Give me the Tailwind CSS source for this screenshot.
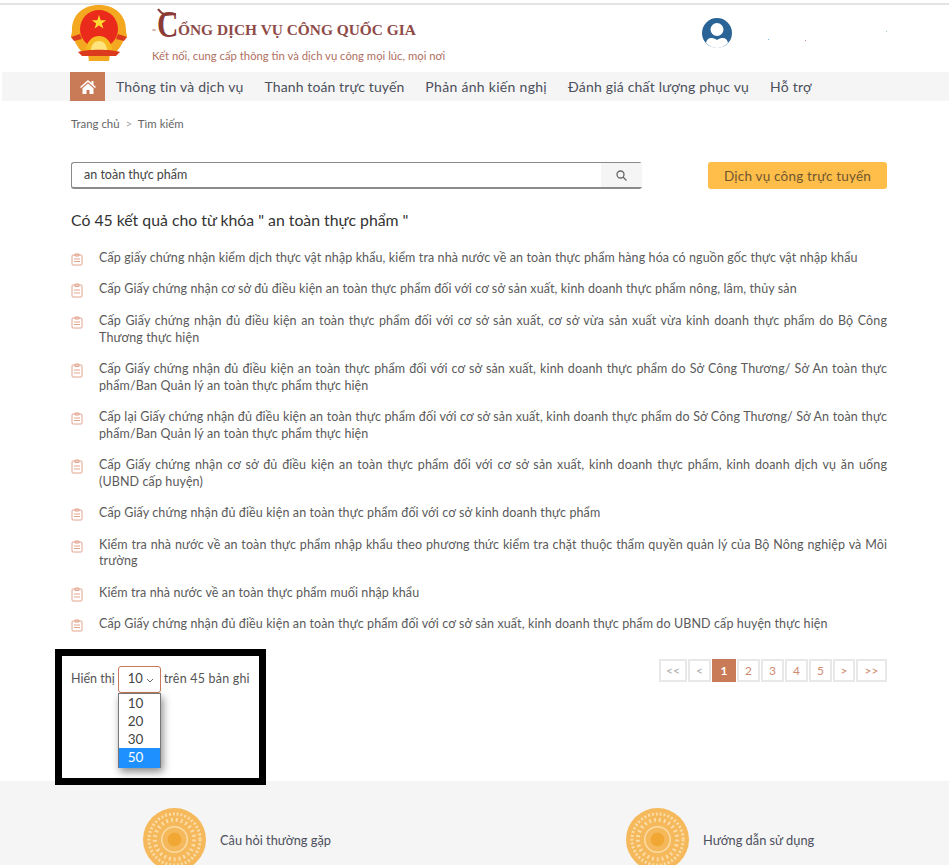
<!DOCTYPE html>
<html lang="vi">
<head>
  <meta charset="UTF-8">
  <meta name="viewport" content="width=device-width, initial-scale=1.0">
  <title>Cổng Dịch vụ công Quốc gia</title>
  <script src="https://cdn.jsdelivr.net/npm/@tailwindcss/browser@4"></script>
</head>
<body class="bg-white h-[865px] overflow-hidden relative font-['Lato',sans-serif] text-[#555]">

  <!-- top strip -->
  <div class="pt-[3px]"><div class="h-[2px] bg-[#e4e4e4]"></div></div>

  <!-- header -->
  <header class="h-[67px] pl-[71px] flex relative">
    <svg class="w-[56px] h-[57px]" viewBox="0 0 56 57">
      <path d="M28 0C44 0 55 10 55 25c0 3 1 5 1 7l-3 2c-2 6-5 10-9 14l-5 1-1 7H18l-1-7-5-1C8 44 5 40 3 34l-3-2c0-2 1-4 1-7C1 10 12 0 28 0z" fill="#f4a81f"/>
      <circle cx="28" cy="24" r="19" fill="#ea2a1b"/>
      <path d="M28 10l1.700 5.200h5.500l-4.400 3.200 1.700 5.200-4.500-3.200-4.500 3.200 1.700-5.200-4.400-3.200h5.500z" fill="#ffdc33"/>
      <path d="M15 46c0-9 6-15 13-15s13 6 13 15z" fill="#f6bb22"/>
      <path d="M20 46c0-6 3-10 8-10s8 4 8 10z" fill="#ffe47e"/>
      <path d="M7 47c8-3 34-3 42 0l-4 4H11z" fill="#dc3a1e"/>
      <path d="M0 32l9-3 2 5-8 2zM56 32l-9-3-2 5 8 2z" fill="#dc3a1e"/>
    </svg>
    <div class="ml-[25px] pt-[2px] w-[300px]">
      <div class="flex items-end h-[36px] font-['Liberation_Serif',serif] font-bold text-[#8e4a47]">
        <span class="relative w-[21px] ml-[5px]">
          <span class="block origin-left scale-x-[0.8] text-[37px] leading-[36px] font-bold text-[#8a3b36]">C</span>
          <svg class="absolute left-[-5px] top-0 w-[28px] h-[36px]" viewBox="0 0 28 36" fill="none" stroke="#8a3b36">
            <path d="M6 2c2 3 5 5 8 6 3 0 6-1 10-1" stroke-width="2"/>
            <ellipse cx="2" cy="23" rx="2" ry="1" fill="#d9b0a0" stroke="none"/>
          </svg>
        </span>
        <span class="text-[15.400px] leading-[22px] pb-[2px] whitespace-nowrap">ỔNG DỊCH VỤ CÔNG QUỐC GIA</span>
      </div>
      <p class="mt-[7px] text-[11.300px] leading-[12px] text-[#b0705f] whitespace-nowrap">Kết nối, cung cấp thông tin và dịch vụ công mọi lúc, mọi nơi</p>
    </div>
    <svg class="ml-[250px] mt-[13px] w-[30px] h-[30px]" viewBox="0 0 30 30">
      <circle cx="15" cy="15" r="15" fill="#2a6496"/>
      <circle cx="15" cy="11.500" r="6.500" fill="#fff"/>
      <path d="M4 25c1-5 5-6.500 11-3 6-3.500 10-2 11 3-3 3-7 5-11 5s-8-2-11-5z" fill="#fff"/>
    </svg>
    <i class="absolute left-[768px] top-[34px] w-px h-px bg-[#7cb7d8]"></i>
    <i class="absolute left-[805px] top-[35px] w-px h-px bg-[#d58aa0]"></i>
    <i class="absolute left-[886px] top-[26px] w-px h-px bg-[#9cc9e4]"></i>
  </header>

  <!-- nav -->
  <nav class="ml-[2px] h-[29px] bg-[#f5f5f5] pl-[68px] flex items-center text-[14px] text-[#4c4f5c] whitespace-nowrap">
    <div class="w-[35px] h-[29px] bg-[#c97a56] flex items-center justify-center mr-[11px]">
      <svg class="w-[16px] h-[14px]" viewBox="0 0 16 14" fill="#fff">
        <path d="M8 0L0 7l1 1 7-6 7 6 1-1-2.500-2.200V1h-2v2z"/>
        <path d="M2.500 8.300L8 3.500l5.500 4.800V14H9.500V10h-3v4h-4z"/>
      </svg>
    </div>
    <div class="flex gap-[21px] tracking-[0.2px]">
      <a href="#">Thông tin và dịch vụ</a>
      <a href="#" class="tracking-[0.1px]">Thanh toán trực tuyến</a>
      <a href="#" class="tracking-[0.3px]">Phản ánh kiến nghị</a>
      <a href="#">Đánh giá chất lượng phục vụ</a>
      <a href="#">Hỗ trợ</a>
    </div>
  </nav>

  <main class="pl-[71px] pr-[62px]">
    <div class="mt-[16px] text-[11.400px] leading-[14px] text-[#666]">Trang chủ <span class="text-[#aaa] mx-[3px]">&gt;</span> Tìm kiếm</div>

    <!-- search -->
    <div class="mt-[31px] flex justify-between">
      <div class="w-[571px] h-[27px] flex border-y border-l border-[#8a8a8a] border-b-2 rounded-[3px]">
        <div class="flex-1 pl-[12px] text-[12.500px] leading-[24px] text-[#444]">an toàn thực phẩm</div>
        <div class="w-[41px] bg-[#f5f5f5] flex items-center justify-center">
          <svg class="w-[11px] h-[11px]" viewBox="0 0 11 11" fill="none" stroke="#666" stroke-width="1.300">
            <circle cx="4.500" cy="4.500" r="3.500"/><path d="M7 7l3.500 3.500"/>
          </svg>
        </div>
      </div>
      <a href="#" class="w-[179px] h-[27px] pt-[2px] bg-[#ffbd4a] rounded-[3px] flex items-center justify-center text-[13.500px] tracking-[0.2px] text-[#6e5630]">Dịch vụ công trực tuyến</a>
    </div>

    <h1 class="mt-[21px] text-[15.800px] leading-[20px] text-[#333]">Có 45 kết quả cho từ khóa " an toàn thực phẩm "</h1>

    <!-- results -->
    <ul class="mt-[20px] flex flex-col gap-[14.800px] text-[12.500px] tracking-[0.11px] leading-[16.600px] text-[#5a5a5a]">
      <li class="flex"><svg class="w-[12px] h-[13px] mt-[3px] mr-[16px] shrink-0" viewBox="0 0 12 13" fill="none" stroke="#e3a48d"><rect x="1" y="2" width="10" height="10" rx="1"/><path d="M4 1h4v2H4zM3 6h6M3 8.500h6"/></svg><span class="flex-1 text-justify">Cấp giấy chứng nhận kiểm dịch thực vật nhập khẩu, kiểm tra nhà nước về an toàn thực phẩm hàng hóa có nguồn gốc thực vật nhập khẩu</span></li>
      <li class="flex"><svg class="w-[12px] h-[15px] mt-[2px] mr-[16px] shrink-0" viewBox="0 0 12 15" fill="none" stroke="#e3a48d"><rect x="1" y="2" width="10" height="12" rx="1"/><path d="M4 1h4v2.500H4zM3 7h6M3 10h6"/></svg><span class="flex-1 text-justify">Cấp Giấy chứng nhận cơ sở đủ điều kiện an toàn thực phẩm đối với cơ sở sản xuất, kinh doanh thực phẩm nông, lâm, thủy sản</span></li>
      <li class="flex"><svg class="w-[12px] h-[13px] mt-[3px] mr-[16px] shrink-0" viewBox="0 0 12 13" fill="none" stroke="#e3a48d"><rect x="1" y="2" width="10" height="10" rx="1"/><path d="M4 1h4v2H4zM3 6h6M3 8.500h6"/></svg><span class="flex-1 text-justify">Cấp Giấy chứng nhận đủ điều kiện an toàn thực phẩm đối với cơ sở sản xuất, cơ sở vừa sản xuất vừa kinh doanh thực phẩm do Bộ Công Thương thực hiện</span></li>
      <li class="flex"><svg class="w-[12px] h-[15px] mt-[2px] mr-[16px] shrink-0" viewBox="0 0 12 15" fill="none" stroke="#e3a48d"><rect x="1" y="2" width="10" height="12" rx="1"/><path d="M4 1h4v2.500H4zM3 7h6M3 10h6"/></svg><span class="flex-1 text-justify">Cấp Giấy chứng nhận đủ điều kiện an toàn thực phẩm đối với cơ sở sản xuất, kinh doanh thực phẩm do Sở Công Thương/ Sở An toàn thực phẩm/Ban Quản lý an toàn thực phẩm thực hiện</span></li>
      <li class="flex"><svg class="w-[12px] h-[13px] mt-[3px] mr-[16px] shrink-0" viewBox="0 0 12 13" fill="none" stroke="#e3a48d"><rect x="1" y="2" width="10" height="10" rx="1"/><path d="M4 1h4v2H4zM3 6h6M3 8.500h6"/></svg><span class="flex-1 text-justify">Cấp lại Giấy chứng nhận đủ điều kiện an toàn thực phẩm đối với cơ sở sản xuất, kinh doanh thực phẩm do Sở Công Thương/ Sở An toàn thực phẩm/Ban Quản lý an toàn thực phẩm thực hiện</span></li>
      <li class="flex"><svg class="w-[12px] h-[15px] mt-[2px] mr-[16px] shrink-0" viewBox="0 0 12 15" fill="none" stroke="#e3a48d"><rect x="1" y="2" width="10" height="12" rx="1"/><path d="M4 1h4v2.500H4zM3 7h6M3 10h6"/></svg><span class="flex-1 text-justify">Cấp Giấy chứng nhận cơ sở đủ điều kiện an toàn thực phẩm đối với cơ sở sản xuất, kinh doanh thực phẩm, kinh doanh dịch vụ ăn uống (UBND cấp huyện)</span></li>
      <li class="flex"><svg class="w-[12px] h-[13px] mt-[3px] mr-[16px] shrink-0" viewBox="0 0 12 13" fill="none" stroke="#e3a48d"><rect x="1" y="2" width="10" height="10" rx="1"/><path d="M4 1h4v2H4zM3 6h6M3 8.500h6"/></svg><span class="flex-1 text-justify">Cấp Giấy chứng nhận đủ điều kiện an toàn thực phẩm đối với cơ sở kinh doanh thực phẩm</span></li>
      <li class="flex"><svg class="w-[12px] h-[13px] mt-[3px] mr-[16px] shrink-0" viewBox="0 0 12 13" fill="none" stroke="#e3a48d"><rect x="1" y="2" width="10" height="10" rx="1"/><path d="M4 1h4v2H4zM3 6h6M3 8.500h6"/></svg><span class="flex-1 text-justify">Kiểm tra nhà nước về an toàn thực phẩm nhập khẩu theo phương thức kiểm tra chặt thuộc thẩm quyền quản lý của Bộ Nông nghiệp và Môi trường</span></li>
      <li class="flex"><svg class="w-[12px] h-[15px] mt-[2px] mr-[16px] shrink-0" viewBox="0 0 12 15" fill="none" stroke="#e3a48d"><rect x="1" y="2" width="10" height="12" rx="1"/><path d="M4 1h4v2.500H4zM3 7h6M3 10h6"/></svg><span class="flex-1 text-justify">Kiểm tra nhà nước về an toàn thực phẩm muối nhập khẩu</span></li>
      <li class="flex"><svg class="w-[12px] h-[13px] mt-[3px] mr-[16px] shrink-0" viewBox="0 0 12 13" fill="none" stroke="#e3a48d"><rect x="1" y="2" width="10" height="10" rx="1"/><path d="M4 1h4v2H4zM3 6h6M3 8.500h6"/></svg><span class="flex-1 text-justify">Cấp Giấy chứng nhận đủ điều kiện an toàn thực phẩm đối với cơ sở sản xuất, kinh doanh thực phẩm do UBND cấp huyện thực hiện</span></li>
    </ul>

    <!-- page size + pagination -->
    <div class="mt-[25.800px] flex justify-between items-start">
      <div class="mt-[7px] flex items-center text-[12.500px] text-[#555] relative">
        <span>Hiển thị</span>
        <div class="relative ml-[3px] mr-[3px] w-[43px] h-[27px] border border-[#c9795a] rounded-[3px] flex items-center pl-[9px] text-[13px] text-[#444]">
          10
          <svg class="absolute right-[6px] top-[11px] w-[8px] h-[5px]" viewBox="0 0 8 5" fill="none" stroke="#666"><path d="M1 1l3 3 3-3"/></svg>
          <ul class="absolute left-[-1px] top-[26px] w-[43px] h-[75px] bg-white border border-[#777] shadow-[2px_4px_8px_rgba(0,0,0,0.45)] text-[13.500px] leading-[18px]">
            <li class="pl-[9px]">10</li>
            <li class="pl-[9px]">20</li>
            <li class="pl-[9px]">30</li>
            <li class="pl-[9px] bg-[#1e90ff] text-white h-[20px]">50</li>
          </ul>
        </div>
        <span class="tracking-[0.2px]">trên 45 bản ghi</span>
      </div>
      <div class="flex gap-px text-[12px] text-[#d08a70] text-center leading-[19px]">
        <a href="#" class="w-[28px] h-[23px] border-2 border-[#e8e8e8] text-[#aaa]">&lt;&lt;</a>
        <a href="#" class="w-[23px] h-[23px] border-2 border-[#e8e8e8] text-[#aaa]">&lt;</a>
        <a href="#" class="w-[24px] h-[23px] bg-[#c97a56] border-2 border-[#c97a56] text-white font-bold">1</a>
        <a href="#" class="w-[23px] h-[23px] border-2 border-[#e8e8e8]">2</a>
        <a href="#" class="w-[23px] h-[23px] border-2 border-[#e8e8e8]">3</a>
        <a href="#" class="w-[23px] h-[23px] border-2 border-[#e8e8e8]">4</a>
        <a href="#" class="w-[23px] h-[23px] border-2 border-[#e8e8e8]">5</a>
        <a href="#" class="w-[22px] h-[23px] border-2 border-[#e8e8e8]">&gt;</a>
        <a href="#" class="w-[31px] h-[23px] border-2 border-[#e8e8e8]">&gt;&gt;</a>
      </div>
    </div>
  </main>

  <!-- annotation frame drawn on the screenshot -->
  <div class="absolute left-[55px] top-[649px] w-[211px] h-[136px] border-[7px] border-black z-10"></div>

  <!-- footer -->
  <footer class="absolute left-0 right-0 top-[781px] h-[84px] bg-[#f5f5f5] text-[12.800px] text-[#4c4f5c]">
    <div class="absolute left-[143px] top-[27px] flex items-center gap-[14px]">
      <svg class="w-[63px] h-[63px]" viewBox="0 0 64 64">
        <circle cx="32" cy="32" r="32" fill="#f5b95c"/>
        <circle cx="32" cy="32" r="26" fill="none" stroke="#fbdca6" stroke-width="3" stroke-dasharray="2 2"/>
        <circle cx="32" cy="32" r="20" fill="none" stroke="#fbdca6" stroke-width="4" stroke-dasharray="2 3"/>
        <circle cx="32" cy="32" r="13" fill="none" stroke="#fbdca6" stroke-width="1.500"/>
        <circle cx="32" cy="32" r="7" fill="#f0a733"/>
      </svg>
      <span class="mt-[2px]">Câu hỏi thường gặp</span>
    </div>
    <div class="absolute left-[626px] top-[27px] flex items-center gap-[14px]">
      <svg class="w-[63px] h-[63px]" viewBox="0 0 64 64">
        <circle cx="32" cy="32" r="32" fill="#f5b95c"/>
        <circle cx="32" cy="32" r="26" fill="none" stroke="#fbdca6" stroke-width="3" stroke-dasharray="2 2"/>
        <circle cx="32" cy="32" r="20" fill="none" stroke="#fbdca6" stroke-width="4" stroke-dasharray="2 3"/>
        <circle cx="32" cy="32" r="13" fill="none" stroke="#fbdca6" stroke-width="1.500"/>
        <circle cx="32" cy="32" r="7" fill="#f0a733"/>
      </svg>
      <span class="mt-[2px]">Hướng dẫn sử dụng</span>
    </div>
  </footer>
</body>
</html>
